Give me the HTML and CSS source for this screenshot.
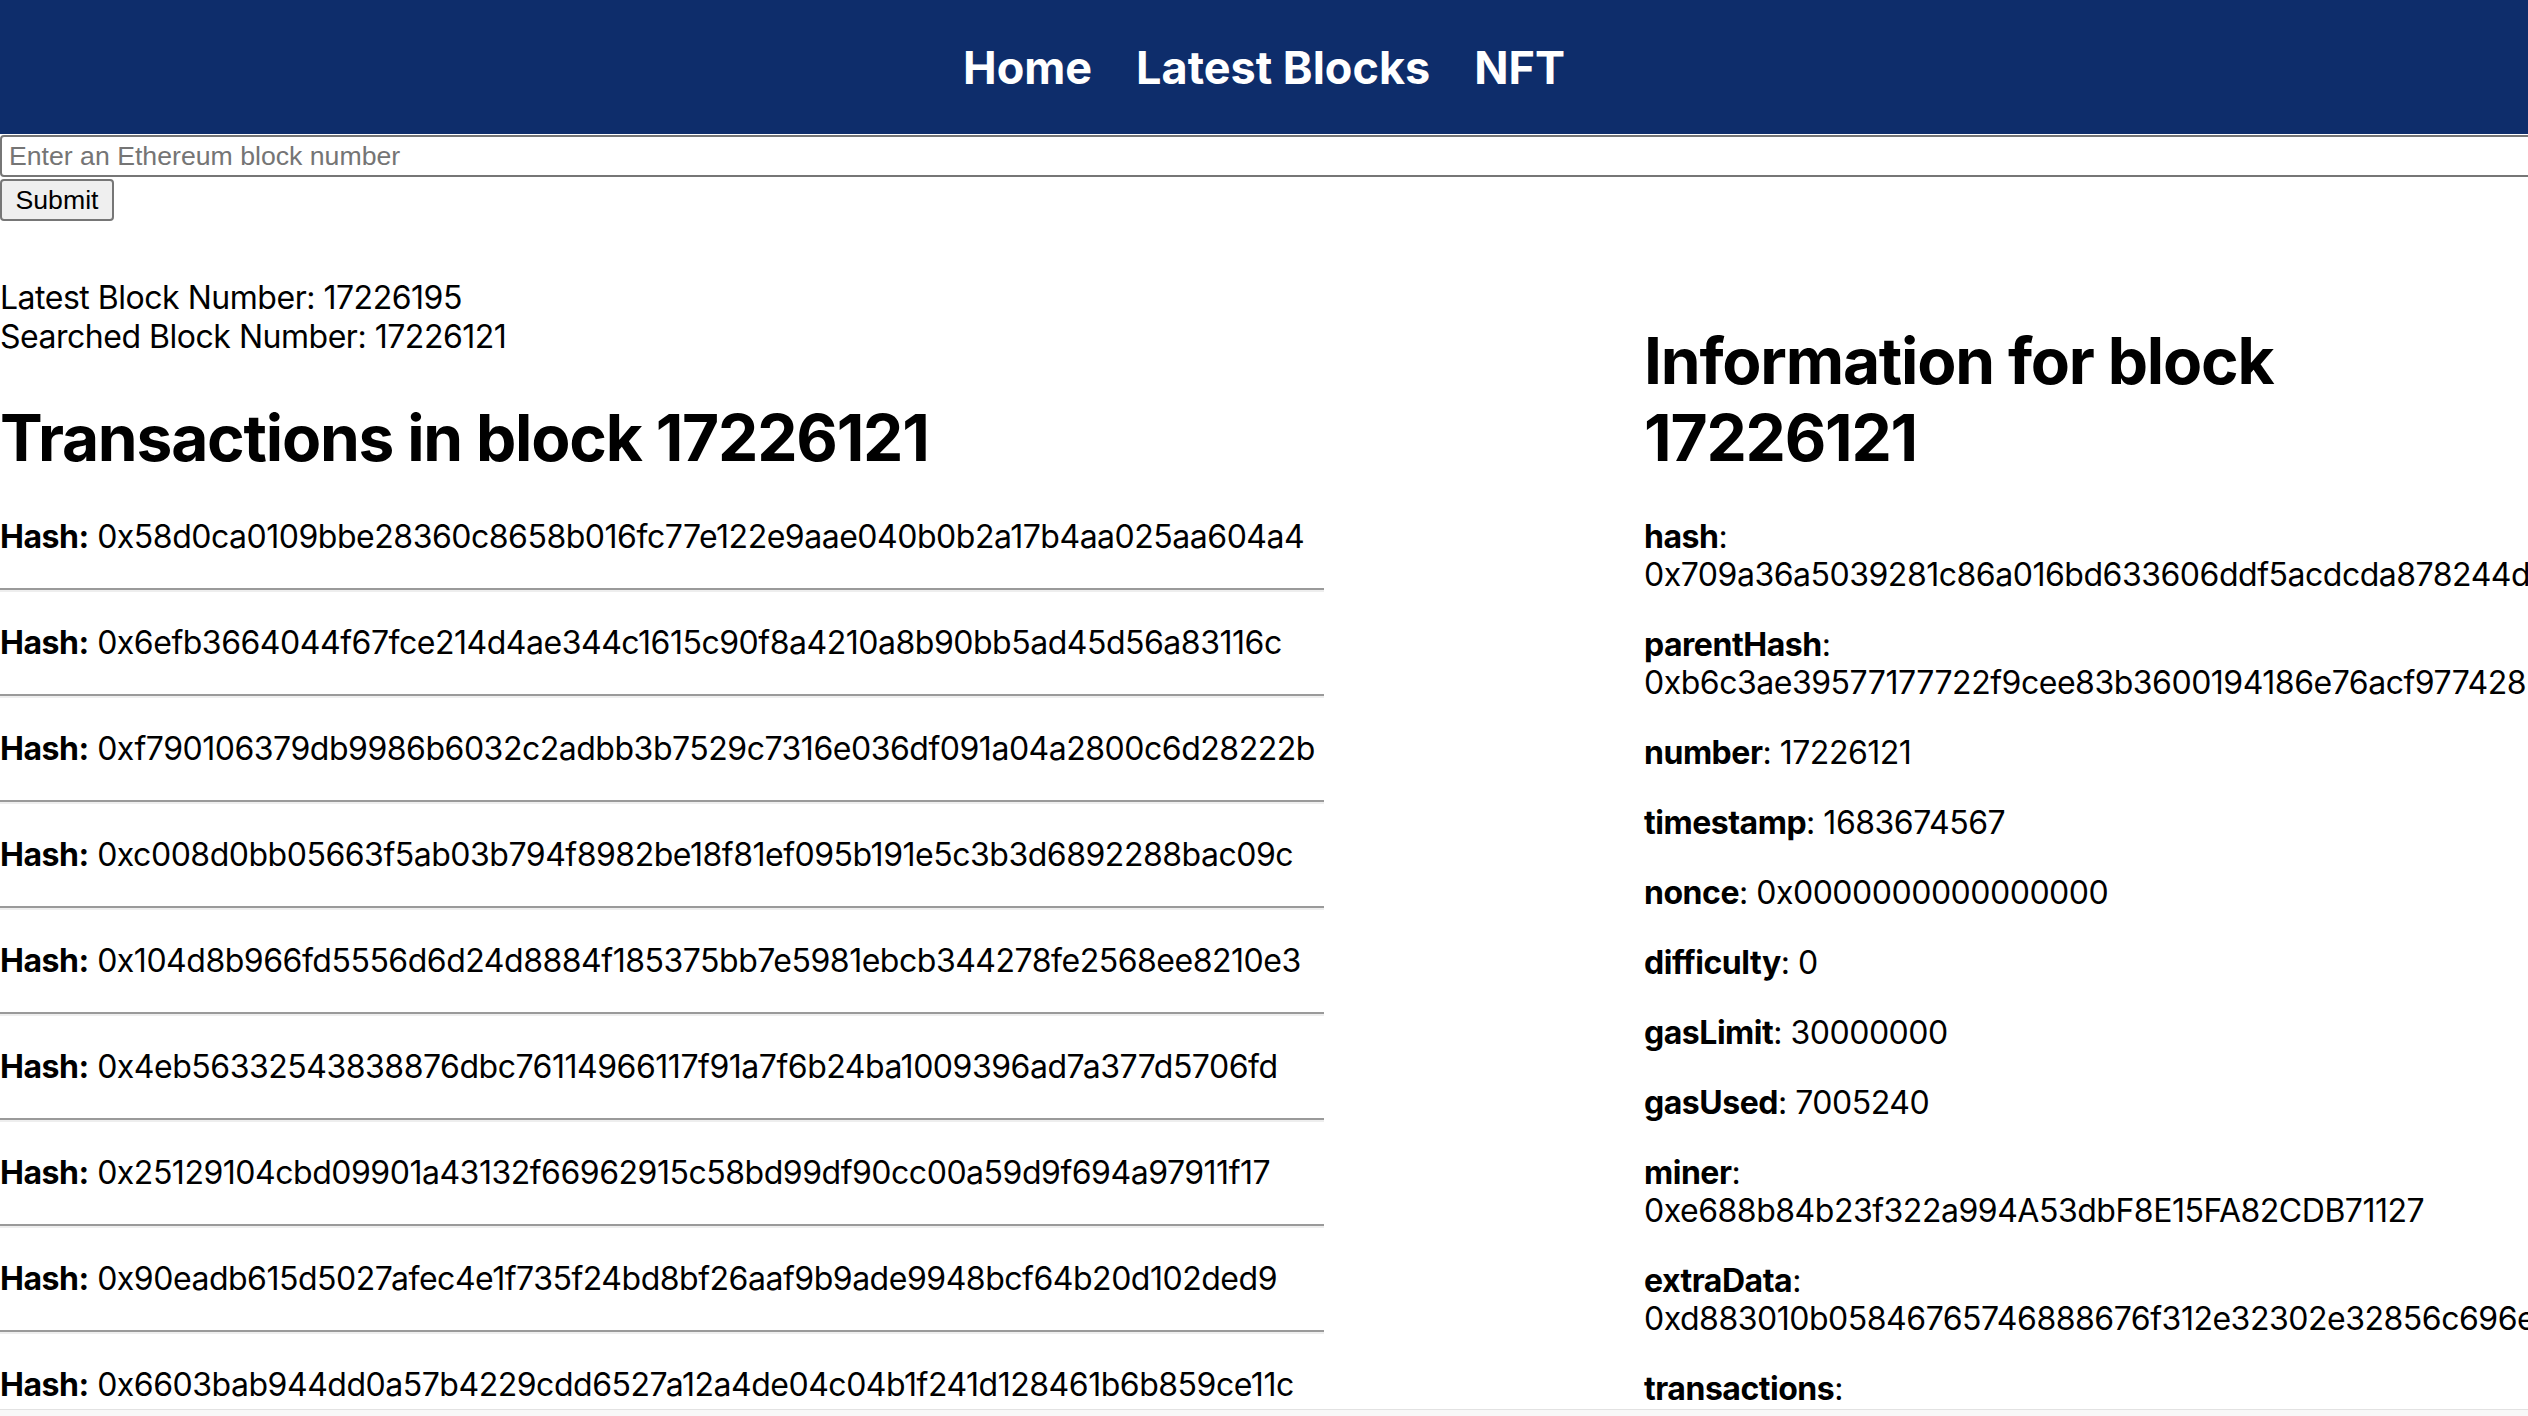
FILE: index.html
```html
<!DOCTYPE html>
<html lang="en">
<head>
<meta charset="utf-8">
<title>Block Explorer</title>
<link rel="stylesheet" href="styles.css">
</head>
<body>
<nav class="topnav">
  <a href="#" class="nav-link">Home</a>
  <a href="#" class="nav-link">Latest Blocks</a>
  <a href="#" class="nav-link">NFT</a>
</nav>
<form class="search">
  <input class="search-input" type="text" placeholder="Enter an Ethereum block number">
  <button class="search-btn" type="button">Submit</button>
</form>
<div class="content">
  <section class="tx-col">
    <div class="meta">
      <div>Latest Block Number: 17226195</div>
      <div>Searched Block Number: 17226121</div>
    </div>
    <h1 class="title">Transactions in block 17226121</h1>
    <div class="tx-list">
      <p class="tx"><strong>Hash:</strong> 0x58d0ca0109bbe28360c8658b016fc77e122e9aae040b0b2a17b4aa025aa604a4</p>
      <hr class="tx-sep">
      <p class="tx"><strong>Hash:</strong> 0x6efb3664044f67fce214d4ae344c1615c90f8a4210a8b90bb5ad45d56a83116c</p>
      <hr class="tx-sep">
      <p class="tx"><strong>Hash:</strong> 0xf790106379db9986b6032c2adbb3b7529c7316e036df091a04a2800c6d28222b</p>
      <hr class="tx-sep">
      <p class="tx"><strong>Hash:</strong> 0xc008d0bb05663f5ab03b794f8982be18f81ef095b191e5c3b3d6892288bac09c</p>
      <hr class="tx-sep">
      <p class="tx"><strong>Hash:</strong> 0x104d8b966fd5556d6d24d8884f185375bb7e5981ebcb344278fe2568ee8210e3</p>
      <hr class="tx-sep">
      <p class="tx"><strong>Hash:</strong> 0x4eb56332543838876dbc76114966117f91a7f6b24ba1009396ad7a377d5706fd</p>
      <hr class="tx-sep">
      <p class="tx"><strong>Hash:</strong> 0x25129104cbd09901a43132f66962915c58bd99df90cc00a59d9f694a97911f17</p>
      <hr class="tx-sep">
      <p class="tx"><strong>Hash:</strong> 0x90eadb615d5027afec4e1f735f24bd8bf26aaf9b9ade9948bcf64b20d102ded9</p>
      <hr class="tx-sep">
      <p class="tx"><strong>Hash:</strong> 0x6603bab944dd0a57b4229cdd6527a12a4de04c04b1f241d128461b6b859ce11c</p>
      <hr class="tx-sep">
    </div>
  </section>
  <section class="info-col">
    <h1 class="title">Information for block 17226121</h1>
    <p class="info"><strong>hash</strong>: 0x709a36a5039281c86a016bd633606ddf5acdcda878244dc1f4e0a9b2d37e5f10</p>
    <p class="info"><strong>parentHash</strong>: 0xb6c3ae39577177722f9cee83b3600194186e76acf97742853ad0e61c2f9b4a77</p>
    <p class="info"><strong>number</strong>: 17226121</p>
    <p class="info"><strong>timestamp</strong>: 1683674567</p>
    <p class="info"><strong>nonce</strong>: 0x0000000000000000</p>
    <p class="info"><strong>difficulty</strong>: 0</p>
    <p class="info"><strong>gasLimit</strong>: 30000000</p>
    <p class="info"><strong>gasUsed</strong>: 7005240</p>
    <p class="info"><strong>miner</strong>: 0xe688b84b23f322a994A53dbF8E15FA82CDB71127</p>
    <p class="info"><strong>extraData</strong>: 0xd883010b05846765746888676f312e32302e32856c696e7578</p>
    <p class="info"><strong>transactions</strong>:</p>
  </section>
</div>
<div class="hscroll"></div>
</body>
</html>
```

FILE: styles.css
```css
html, body {
  margin: 0;
  padding: 0;
}
body {
  font-family: Inter, "Noto Sans", sans-serif;
  font-size: 32px;
  line-height: 38px;
  letter-spacing: -0.48px;
  color: #000;
  background: #fff;
  overflow-x: hidden;
}
.topnav {
  height: 134px;
  background: #0e2d6b;
  display: flex;
  justify-content: center;
  align-items: center;
  gap: 44px;
}
.nav-link {
  color: #fff;
  font-weight: 700;
  font-size: 45px;
  line-height: 1;
  letter-spacing: 0;
  text-decoration: none;
}
.search {
  margin: 1px 0 0;
}
.search-input {
  display: block;
  box-sizing: border-box;
  width: calc(100% + 12px);
  height: 42px;
  margin: 0;
  border: 2px solid #767676;
  border-radius: 4px;
  padding: 0 7px;
  font-family: "Liberation Sans", Arial, sans-serif;
  font-size: 26.67px;
  letter-spacing: 0;
  color: #000;
  background: #fff;
}
.search-input::placeholder {
  color: #757575;
}
.search-btn {
  display: block;
  box-sizing: border-box;
  height: 42px;
  width: 114px;
  margin: 2px 0 0;
  border: 2px solid #767676;
  border-radius: 4px;
  background: #efefef;
  padding: 0;
  font-family: "Liberation Sans", Arial, sans-serif;
  font-size: 26.67px;
  letter-spacing: 0;
  color: #000;
}
.content {
  display: flex;
  justify-content: space-between;
  align-items: flex-start;
  margin-top: 58px;
}
.tx-col {
  flex: none;
  width: 1324px;
}
.info-col {
  flex: none;
  width: 884px;
}
.meta {
  line-height: 38.5px;
}
.title {
  font-size: 64px;
  line-height: 77px;
  font-weight: 700;
  letter-spacing: -1.2px;
  margin: 43px 0 41.5px;
}
.tx {
  margin: 32px 0;
  white-space: nowrap;
}
.tx-sep {
  height: 0;
  margin: 0;
  border: 0;
  border-top: 2px solid #9a9a9a;
  border-bottom: 2px solid #eeeeee;
}
.info {
  margin: 32px 0;
}
.hscroll {
  position: fixed;
  left: 0;
  right: 0;
  bottom: 0;
  height: 6px;
  background: #f8f8f8;
  border-top: 1px solid #e2e2e2;
}
```
